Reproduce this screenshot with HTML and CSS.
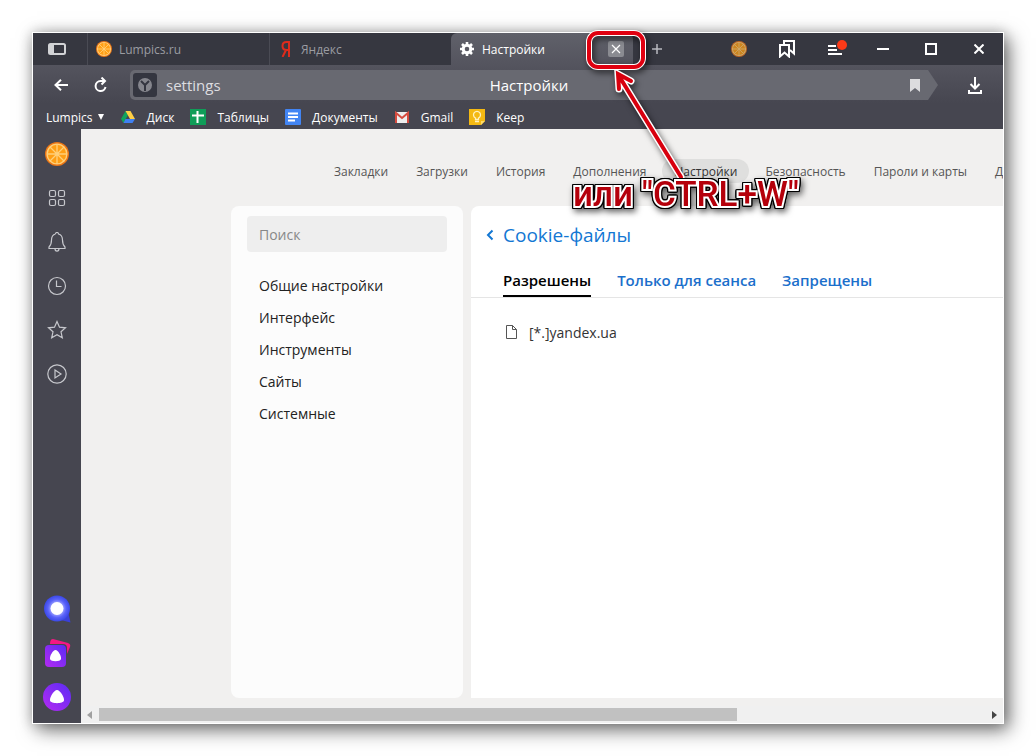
FILE: index.html
```html
<!DOCTYPE html>
<html lang="ru">
<head>
<meta charset="utf-8">
<meta name="viewport" content="width=device-width, initial-scale=1">
<title>Настройки</title>
<link rel="stylesheet" href="styles.css">
</head>
<body>
<svg class="defs" aria-hidden="true">
  <defs>
    <symbol id="orange" viewBox="0 0 24 24">
      <circle cx="12" cy="12" r="12" fill="#ec7615"/>
      <circle cx="12" cy="12" r="10.6" fill="#ffd07a"/>
      <circle cx="12" cy="12" r="9.2" fill="#ff9f15"/>
      <g stroke="#ffd07a" stroke-width="1.3"><path d="M12 2v20M2 12h20M5 5l14 14M19 5 5 19"/></g>
    </symbol>
    <linearGradient id="violet" x1="1" y1="0" x2="0" y2="1"><stop offset="0" stop-color="#5a2cf5"/><stop offset="1" stop-color="#b52af2"/></linearGradient>
    <radialGradient id="glow"><stop offset=".4" stop-color="#a9aeff"/><stop offset=".7" stop-color="#5a62fa"/><stop offset="1" stop-color="#3a48e6"/></radialGradient>
  </defs>
</svg>
<div class="window">
  <header class="tabbar">
    <button class="cell panel-toggle" aria-label="Боковая панель"><svg width="18" height="12" viewBox="0 0 18 12"><rect x="1" y="1" width="16" height="10" rx="1.5" fill="none" stroke="#d2d3d6" stroke-width="2"/><path d="M1 1h5v10H1z" fill="#d2d3d6"/></svg></button>
    <div class="tab"><svg width="16" height="16"><use href="#orange"/></svg><span>Lumpics.ru</span></div>
    <div class="tab"><svg width="16" height="16" viewBox="0 0 16 16" fill="none" stroke="#dd2b1c" stroke-width="2"><path d="M11 16V1H8.500C5.500 1 4.500 3 4.500 5s1 4 4 4H11M8 9l-3.500 7"/></svg><span>Яндекс</span></div>
    <div class="tab active"><svg width="16" height="16" viewBox="0 0 16 16"><circle cx="8" cy="8" r="3.800" fill="none" stroke="#fff" stroke-width="3"/><path d="M8 1v2.500M8 12.500V15M1 8h2.500M12.500 8H15M3 3l2 2M11 11l2 2M13 3l-2 2M5 11l-2 2" stroke="#fff" stroke-width="2.600"/></svg><span>Настройки</span>
      <button class="close" aria-label="Закрыть вкладку"><svg width="10" height="10" viewBox="0 0 10 10"><path d="M1 1l8 8M9 1 1 9" stroke="#fff" stroke-width="1.200"/></svg></button></div>
    <button class="cell" aria-label="Новая вкладка"><svg width="10" height="10" viewBox="0 0 10 10"><path d="M5 0v10M0 5h10" stroke="#b9bac0" stroke-width="1.500"/></svg></button>
    <div class="controls">
      <button class="cell dim" aria-label="Lumpics"><svg width="16" height="16"><use href="#orange"/></svg></button>
      <button class="cell" aria-label="Закладки"><svg width="16" height="18" viewBox="0 0 16 18" fill="none" stroke="#fff" stroke-width="2"><path d="M1 5h9v11.500l-4.500-4L1 16.500zM5 5V1h10v12.500L11 10"/></svg></button>
      <button class="cell" aria-label="Меню"><svg class="spill" width="14" height="16" viewBox="0 0 14 16"><path d="M0 5h8M0 9h9M0 13h14" stroke="#fff" stroke-width="2"/><circle cx="14" cy="4" r="5" fill="#fc3a18"/></svg></button>
      <button class="cell" aria-label="Свернуть"><svg width="12" height="12"><path d="M0 6h12" stroke="#fff" stroke-width="2"/></svg></button>
      <button class="cell" aria-label="Развернуть"><svg width="12" height="12"><path d="M1 1h10v10H1z" fill="none" stroke="#fff" stroke-width="2"/></svg></button>
      <button class="cell" aria-label="Закрыть"><svg width="10" height="10"><path d="M.5.5l9 9M9.500.5l-9 9" stroke="#fff" stroke-width="2"/></svg></button>
    </div>
  </header>
  <div class="toolbar">
    <div class="address-row">
      <button class="nav-button" aria-label="Назад"><svg width="14" height="12" viewBox="0 0 14 12" fill="none" stroke="#fff" stroke-width="2"><path d="M14 6H2M7 .8 1.500 6 7 11.200"/></svg></button>
      <button class="nav-button" aria-label="Обновить"><svg width="14" height="16" viewBox="0 0 14 16" fill="none" stroke="#fff" stroke-width="2"><path d="M10 4H6.500a5 5 0 1 0 5 6M7.500.5 11 4 7.500 7.500"/></svg></button>
      <div class="address">
        <span class="site"><svg width="16" height="16" viewBox="0 0 16 16"><circle cx="8" cy="8" r="7" fill="#85868d"/><path d="M4 4l4 4 4-4M8 8v6" fill="none" stroke="#343640" stroke-width="2"/></svg></span>
        <input class="url" aria-label="Адрес" value="settings">
        <span class="page-title">Настройки</span>
        <button class="mark" aria-label="Добавить в закладки"><svg width="10" height="13"><path d="M0 0h10v13L5 9l-5 4z" fill="#dcdcde"/></svg></button>
      </div>
      <button class="download" aria-label="Загрузки"><svg width="14" height="17" viewBox="0 0 14 17" fill="none" stroke="#fff" stroke-width="2"><path d="M7 0v11M2.500 7 7 11.500 11.500 7M1 13v3h12v-3"/></svg></button>
    </div>
    <nav class="bookmarks">
      <a href="#" class="folder">Lumpics <svg width="6" height="6"><path d="M0 0h6L3 6z" fill="#fff"/></svg></a>
      <a href="#"><svg width="16" height="16" viewBox="0 0 16 16"><path d="M5.500 2 1 10l2.500 4L8 6z" fill="#11a35c"/><path d="M5.500 2h5L15 10h-5z" fill="#ffcf45"/><path d="M5.500 10H15l-2.500 4h-9z" fill="#3f80f2"/></svg>Диск</a>
      <a href="#"><svg width="16" height="16"><path d="M0 0h16v16H0z" fill="#0f9d58"/><path d="M7.500 2v12M2 6.500h12" stroke="#fff" stroke-width="2"/></svg>Таблицы</a>
      <a href="#"><svg width="16" height="16"><rect width="16" height="16" rx="1" fill="#4285f4"/><path d="M3 4.500h10M3 8h10M3 11.500h7" stroke="#fff" stroke-width="1.800"/></svg>Документы</a>
      <a href="#"><svg width="16" height="16" viewBox="0 0 16 16"><path d="M1 3h14v11H1z" fill="#eee"/><path d="M2 14V4l6 5 6-5v10" fill="none" stroke="#d54b3f" stroke-width="2"/></svg>Gmail</a>
      <a href="#"><svg width="16" height="16" viewBox="0 0 16 16"><path d="M0 0h16v12l-4 4H0z" fill="#f4b913"/><path d="M16 12h-4v4z" fill="#ffdc6b"/><path d="M6.500 10.500V9a3.500 3.500 0 1 1 3 0v1.500zM6 12.500h4" fill="none" stroke="#fff1bf" stroke-width="1.300"/></svg>Keep</a>
    </nav>
  </div>
  <div class="body">
    <aside class="rail">
      <a href="#" aria-label="Lumpics"><svg width="24" height="24"><use href="#orange"/></svg></a>
      <a href="#" aria-label="Табло"><svg width="18" height="18"><g class="line"><rect x="1.500" y="1.500" width="6" height="6" rx="1.500"/><rect x="10.500" y="1.500" width="6" height="6" rx="1.500"/><rect x="1.500" y="10.500" width="6" height="6" rx="1.500"/><rect x="10.500" y="10.500" width="6" height="6" rx="1.500"/></g></svg></a>
      <a href="#" aria-label="Уведомления"><svg width="18" height="20" viewBox="0 0 18 20"><path class="line" d="M7.500 2a1.500 1.500 0 0 1 3 0c3 .8 4 3 4 6 0 4 .8 5.500 2.500 7v1.500H1V15c1.700-1.500 2.500-3 2.500-7 0-3 1-5.200 4-6M7 16.500c0 3.500 4 3.500 4 0"/></svg></a>
      <a href="#" aria-label="История"><svg width="20" height="20"><g class="line"><circle cx="10" cy="10" r="8.500"/><path d="M9.500 4.500v6h5"/></g></svg></a>
      <a href="#" aria-label="Избранное"><svg width="20" height="20"><path class="line" d="M10 1.500l2.500 5.700 6 .6-4.500 4 1.300 6L10 14.700l-5.300 3.100 1.300-6-4.500-4 6-.6z"/></svg></a>
      <a href="#" aria-label="Видео"><svg width="20" height="20"><g class="line"><circle cx="10" cy="10" r="9.200"/><path d="M8 6l6 4-6 4z"/></g></svg></a>
      <div class="services">
        <a href="#" aria-label="Поиск"><svg width="28" height="28"><path d="M25 16l2.500 11.500L14 24z" fill="#3a40d8"/><circle cx="14" cy="13.500" r="13" fill="url(#glow)"/><circle cx="14" cy="13.500" r="6.500" fill="#fff"/></svg></a>
        <a href="#" aria-label="Коллекции"><svg width="28" height="28" viewBox="0 0 28 28"><path d="M10 0l15 4q3 1 2 4l-3 7L7 5q0-5 3-5z" fill="#f51884"/><rect x="1" y="5" width="23" height="23" rx="4" fill="#464650"/><rect x="2" y="6" width="21" height="22" rx="4" fill="url(#violet)"/><path d="M12.500 11c2.500 0 6 6 5.500 9s-10.500 3-11 0 3-9 5.500-9z" fill="#fff"/></svg></a>
        <a href="#" aria-label="Алиса"><svg width="28" height="28"><circle cx="14" cy="14" r="14" fill="url(#violet)"/><path d="M14 7c3 0 7.500 7 7 10.500-.5 3.500-13.500 3.500-14 0C6.500 14 11 7 14 7z" fill="#fff"/></svg></a>
      </div>
    </aside>
    <main class="content">
      <nav class="sections">
        <a href="#">Закладки</a><a href="#">Загрузки</a><a href="#">История</a><a href="#">Дополнения</a><a href="#" class="current">Настройки</a><a href="#">Безопасность</a><a href="#">Пароли и карты</a><a href="#">Д</a>
      </nav>
      <div class="panels">
        <div class="menu">
          <input class="search" type="search" placeholder="Поиск" aria-label="Поиск">
          <nav class="menu-list">
            <a href="#">Общие настройки</a><a href="#">Интерфейс</a><a href="#">Инструменты</a><a href="#">Сайты</a><a href="#">Системные</a>
          </nav>
        </div>
        <section class="cookies">
          <h1><a href="#"><svg width="8" height="12"><path d="M6.500 1.500 2 6l4.500 4.500" fill="none" stroke="#1377d3" stroke-width="2"/></svg>Cookie-файлы</a></h1>
          <div class="cookie-tabs"><button class="selected">Разрешены</button><button>Только для сеанса</button><button>Запрещены</button></div>
          <div class="site-row"><svg width="12" height="16"><path d="M1.500 1.500h6l4 4v9h-10zM7.500 1.500v4h4" fill="none" stroke="#555"/></svg>[*.]yandex.ua</div>
        </section>
      </div>
      <div class="scrollbar"><svg width="5" height="8"><path d="M5 0v8L0 4z" fill="#a0a0a0"/></svg><div class="track"><div class="thumb"></div></div><svg width="5" height="8"><path d="M0 0v8l5-4z" fill="#444"/></svg></div>
    </main>
  </div>
  <div class="note">
    <svg class="spill" width="240" height="150" viewBox="0 0 240 150">
      <g fill="none" stroke-linecap="round" stroke-linejoin="round">
        <rect x="16" y="1" width="54" height="34" rx="9" stroke="#fff" stroke-width="6"/>
        <path d="M108 145 46 44M58 49 45 42l1 15" stroke="#fff" stroke-width="7" stroke-linejoin="miter"/>
        <rect x="16" y="1" width="54" height="34" rx="9" stroke="#e00010" stroke-width="4"/>
        <path d="M108 145 46 44M58 49 45 42l1 15" stroke="#d8000e" stroke-width="4" stroke-linejoin="miter"/>
      </g>
    </svg>
    <p>или "CTRL+W"</p>
  </div>
</div>
</body>
</html>
```
FILE: styles.css
```css
* { box-sizing: border-box; }

body {
  margin: 0;
  padding: 32px;
  min-height: 100vh;
  display: flex;
  background: #fff;
  font-family: "Open Sans", "Noto Sans", sans-serif;
  font-size: 12px;
}

a { color: inherit; text-decoration: none; }
button { padding: 0; border: 0; background: none; color: inherit; font: inherit; }
svg { display: block; flex: none; }
.defs { position: absolute; width: 0; height: 0; }
.spill { overflow: visible; }

.window {
  position: relative;
  flex: 1;
  min-width: 0;
  display: flex;
  flex-direction: column;
  border: 1px solid #fff;
  box-shadow: 5px 6px 18px rgba(0, 0, 0, .55), 0 0 12px rgba(0, 0, 0, .2);
}

.tabbar { display: flex; height: 32px; background: #363740; color: #9b9ca2; }
.cell { width: 48px; display: flex; align-items: center; justify-content: center; }
.panel-toggle { width: 54px; padding-right: 6px; }
.tab {
  width: 182px;
  display: flex;
  align-items: center;
  gap: 7px;
  padding: 0 8px;
  border-left: 1px solid #4a4b54;
}
.tab.active {
  padding-right: 9px;
  border: 0;
  border-radius: 6px 6px 0 0;
  background: linear-gradient(#60616a, #54545e);
  color: #fff;
}
.close {
  width: 16px;
  height: 16px;
  margin-left: auto;
  display: flex;
  align-items: center;
  justify-content: center;
  border-radius: 2px;
  background: #8a8b91;
}
.controls { display: flex; margin-left: auto; }
.dim { opacity: .75; }

.toolbar { height: 64px; background: linear-gradient(#54545e, #464650 60%); color: #fff; }
.address-row { display: flex; align-items: center; height: 40px; padding: 0 4px 0 8px; }
.nav-button { width: 40px; height: 30px; display: flex; align-items: center; justify-content: center; }
.address {
  flex: 1;
  height: 30px;
  display: grid;
  grid-template-columns: 33px 1fr auto 1fr 28px;
  align-items: center;
  margin-left: 9px;
  padding: 0 18px 0 3px;
  border-radius: 5px 0 0 5px;
  background: #686971;
  clip-path: polygon(0 0, calc(100% - 10px) 0, 100% 50%, calc(100% - 10px) 100%, 0 100%);
  font-size: 15px;
}
.site {
  width: 24px;
  height: 24px;
  display: flex;
  align-items: center;
  justify-content: center;
  border-radius: 3px;
  background: #343640;
}
.url { width: 100%; min-width: 0; padding: 0; border: 0; background: none; color: #dddde0; font: inherit; }
.mark { grid-column: 5; justify-self: end; }
.download { width: 48px; margin-left: 13px; display: flex; justify-content: center; }
.bookmarks { display: flex; align-items: center; gap: 16px; height: 24px; padding-left: 13px; }
.bookmarks a { display: flex; align-items: center; gap: 11px; }
.bookmarks .folder { gap: 5px; }

.body { flex: 1; display: flex; min-height: 0; }
.rail { width: 48px; display: flex; flex-direction: column; background: #464650; padding: 3px 0 11px; }
.rail a { height: 44px; display: flex; align-items: center; justify-content: center; }
.line { fill: none; stroke: #c7c8cd; stroke-width: 1.2; }
.services { margin-top: auto; padding-bottom: 1px; }
.services a { height: 44px; }
.services a:last-child { height: 28px; margin-top: 8px; }

.content { flex: 1; min-width: 0; display: flex; flex-direction: column; background: #f1f0ef; }
.sections {
  display: flex;
  gap: 4px;
  overflow: hidden;
  padding: 30px 0 0 241px;
  color: #555;
  white-space: nowrap;
}
.sections a { padding: 2px 12px 0; line-height: 22px; border-radius: 12px; }
.sections .current { background: #dfdfde; color: #333; }
.panels { flex: 1; display: flex; gap: 8px; margin-top: 23px; padding-left: 150px; }
.menu { width: 232px; padding: 10px 16px; border-radius: 8px; background: #fcfcfc; }
.search {
  width: 100%;
  height: 36px;
  padding: 0 12px;
  border: 0;
  border-radius: 4px;
  background: #eee;
  font: inherit;
  font-size: 14px;
}
.search::placeholder { color: #888; }
.menu-list { display: flex; flex-direction: column; padding: 18px 12px; font-size: 14px; color: #222; }
.menu-list a { line-height: 32px; }
.cookies { flex: 1; border-radius: 8px 0 0 0; background: #fff; }
h1 { margin: 0; padding: 15px 0 0 15px; font-size: 19px; font-weight: 400; line-height: 28px; color: #1377d3; }
h1 a { display: flex; align-items: center; gap: 9px; }
.cookie-tabs {
  display: flex;
  gap: 26px;
  margin-top: 15px;
  padding-left: 32px;
  border-bottom: 1px solid #e5e5e5;
  color: #1b6fcb;
  font-size: 15px;
  font-weight: 600;
}
.cookie-tabs button { height: 33px; border-bottom: 2px solid transparent; }
.cookie-tabs .selected { border-color: #000; color: #000; }
.site-row { display: flex; align-items: center; gap: 12px; height: 24px; margin: 22px 34px; font-size: 14px; color: #333; }
.scrollbar {
  display: flex;
  align-items: center;
  gap: 7px;
  height: 17px;
  margin-top: 8px;
  padding: 0 6px;
  background: #f0f0f0;
}
.track { flex: 1; }
.thumb { width: 72%; height: 13px; background: #c1c1c1; }

.note { position: absolute; left: 540px; top: -1px; pointer-events: none; filter: drop-shadow(2px 3px 3px rgba(0, 0, 0, .6)); }
.note p {
  margin: 0;
  font: 500 35px/26px Roboto, sans-serif;
  white-space: nowrap;
  color: #b5000b;
  -webkit-text-stroke: 4px #fff;
  paint-order: stroke fill;
  filter: drop-shadow(1px 0 0 #000) drop-shadow(-1px 0 0 #000) drop-shadow(0 1px 0 #000) drop-shadow(0 -1px 0 #000);
}
```
